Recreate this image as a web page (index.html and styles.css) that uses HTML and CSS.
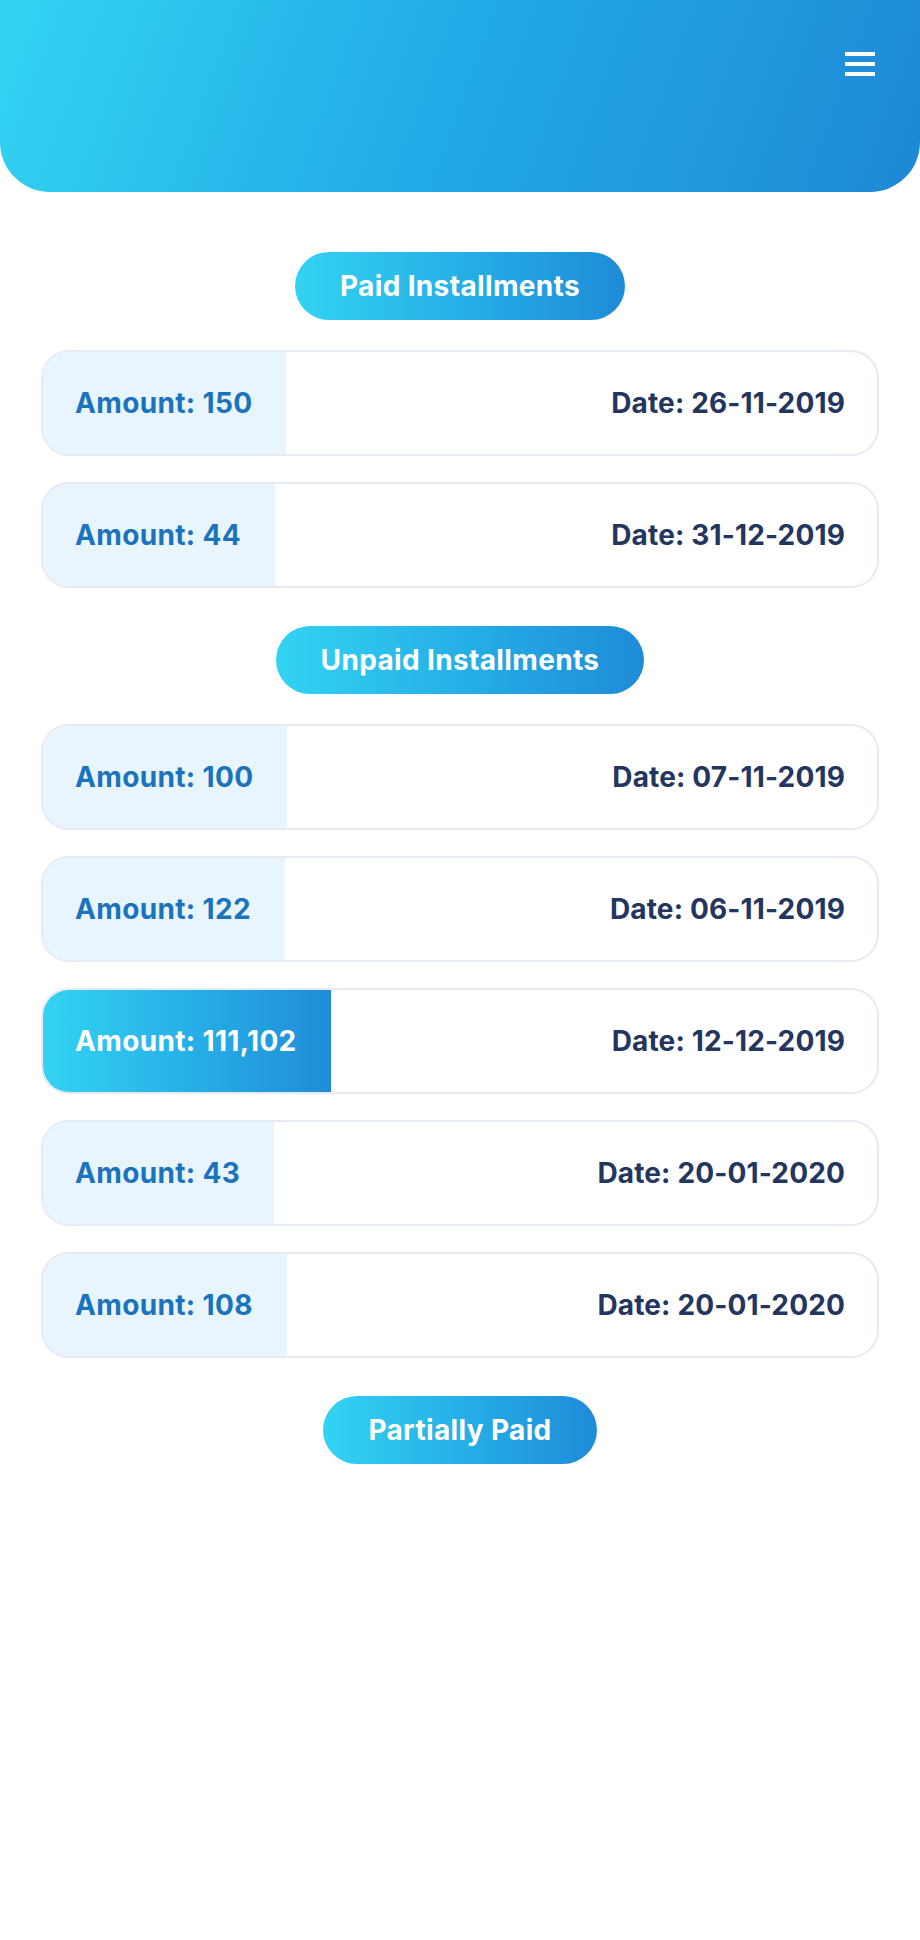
FILE: index.html
```html
<!DOCTYPE html>
<html lang="en">
<head>
<meta charset="utf-8">
<title>Installments</title>
<link rel="stylesheet" href="styles.css">
</head>
<body>
<header class="top-bar">
  <button class="menu-btn" aria-label="Menu">
    <span class="menu-line"></span>
    <span class="menu-line"></span>
    <span class="menu-line"></span>
  </button>
</header>
<main class="content">
  <section class="group">
    <div class="pill-wrap"><span class="pill">Paid Installments</span></div>
    <div class="rows">
      <div class="row"><div class="amount">Amount: 150</div><div class="date">Date: 26-11-2019</div></div>
      <div class="row"><div class="amount">Amount: 44</div><div class="date">Date: 31-12-2019</div></div>
    </div>
  </section>
  <section class="group">
    <div class="pill-wrap"><span class="pill">Unpaid Installments</span></div>
    <div class="rows">
      <div class="row"><div class="amount">Amount: 100</div><div class="date">Date: 07-11-2019</div></div>
      <div class="row"><div class="amount">Amount: 122</div><div class="date">Date: 06-11-2019</div></div>
      <div class="row"><div class="amount amount-active">Amount: 111,102</div><div class="date">Date: 12-12-2019</div></div>
      <div class="row"><div class="amount">Amount: 43</div><div class="date">Date: 20-01-2020</div></div>
      <div class="row"><div class="amount">Amount: 108</div><div class="date">Date: 20-01-2020</div></div>
    </div>
  </section>
  <section class="group">
    <div class="pill-wrap"><span class="pill">Partially Paid</span></div>
  </section>
</main>
</body>
</html>
```
FILE: styles.css
```css
* { box-sizing: border-box; }
html, body { margin: 0; padding: 0; background: #ffffff; }
body {
  width: 920px;
  min-height: 1940px;
  font-family: Inter, "Noto Sans", "Liberation Sans", sans-serif;
  font-weight: 700;
  letter-spacing: 0.35px;
}
.top-bar {
  height: 192px;
  border-radius: 0 0 50px 50px;
  background: linear-gradient(110deg, #34d4f3 0%, #22ade7 45%, #1e88d5 100%);
  display: flex;
  justify-content: flex-end;
  align-items: flex-start;
  padding: 52px 45px 0 0;
}
.menu-btn {
  width: 30px;
  height: 24px;
  padding: 0;
  border: 0;
  background: transparent;
  display: flex;
  flex-direction: column;
  justify-content: space-between;
}
.menu-line {
  display: block;
  width: 30px;
  height: 3.7px;
  background: #ffffff;
}
.content {
  padding: 0 41px;
}
.group {
  display: flex;
  flex-direction: column;
}
.group:first-child { margin-top: 60px; }
.group + .group { margin-top: 38px; }
.pill-wrap {
  display: flex;
  justify-content: center;
}
.pill {
  height: 68px;
  padding: 0 45px;
  border-radius: 34px;
  display: inline-flex;
  align-items: center;
  color: #ffffff;
  font-size: 28px;
  background: linear-gradient(90deg, #33d3f2 0%, #25ace6 55%, #1e8bd7 100%);
}
.rows {
  margin-top: 30px;
  display: flex;
  flex-direction: column;
  gap: 26px;
}
.row {
  height: 106px;
  border: 2px solid #e6ebf3;
  border-radius: 28px;
  overflow: hidden;
  display: flex;
  align-items: stretch;
  font-size: 28px;
}
.amount {
  display: flex;
  align-items: center;
  padding: 0 34px 0 32px;
  background: #e8f5fd;
  color: #1b72bd;
}
.amount-active {
  color: #ffffff;
  background: linear-gradient(90deg, #33d3f2 0%, #27b0e7 50%, #1f8cd7 100%);
}
.date {
  flex: 1;
  display: flex;
  align-items: center;
  justify-content: flex-end;
  padding-right: 32px;
  color: #22365f;
  letter-spacing: 0.15px;
}
```
